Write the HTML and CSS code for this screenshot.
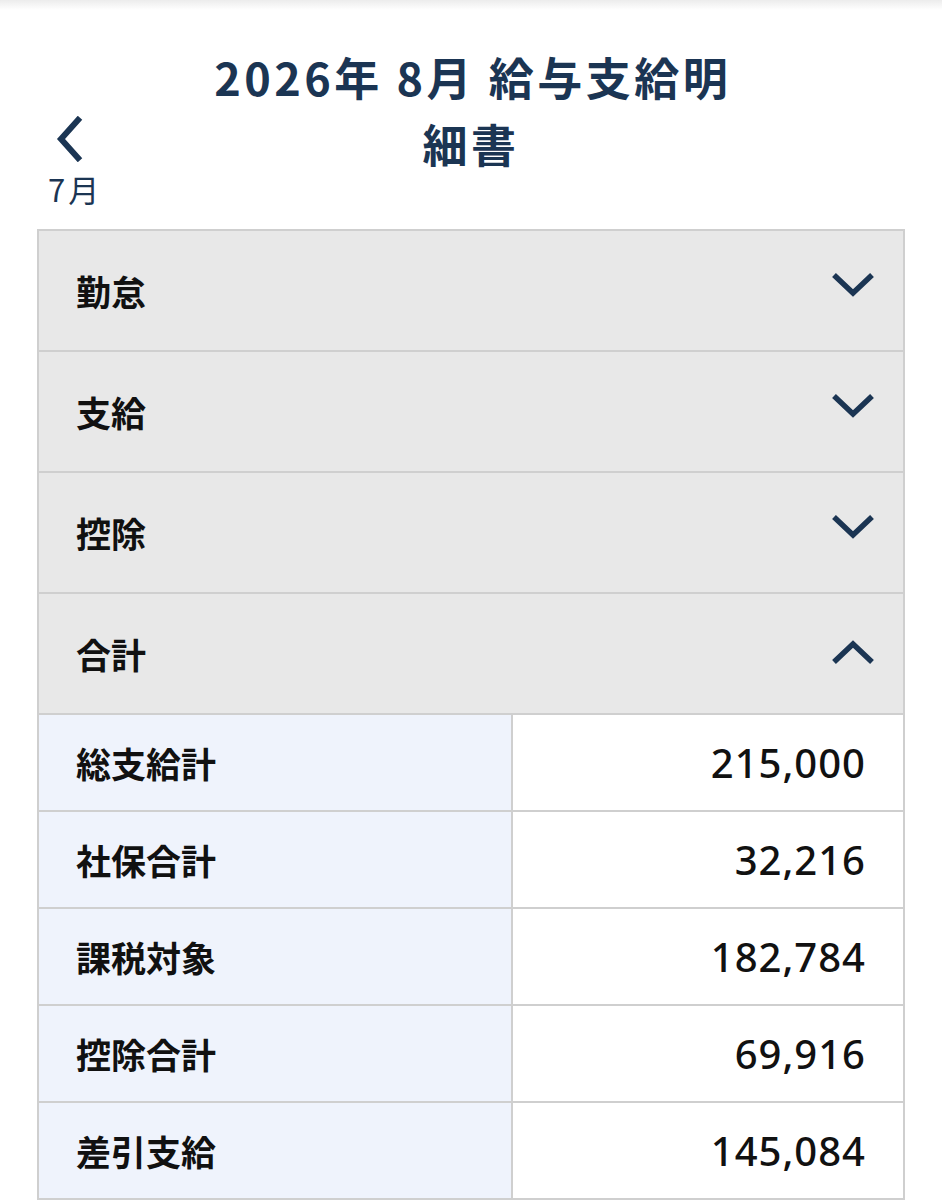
FILE: index.html
```html
<!DOCTYPE html>
<html lang="ja">
<head>
<meta charset="utf-8">
<link rel="stylesheet" href="styles.css">
</head>
<body>
<div class="topshade"></div>
<header class="header">
  <div class="back">
    <svg class="back-icon" width="34" height="46" viewBox="0 0 34 46"><path d="M27 4 L10 23 L27 42" fill="none" stroke="#1b3553" stroke-width="6" stroke-linecap="square"/></svg>
    <span class="back-label">7月</span>
  </div>
  <h1 class="title">2026年 8月 給与支給明細書</h1>
  <div class="spacer"></div>
</header>
<main class="panel">
  <div class="section"><span class="section-name">勤怠</span><svg class="chev" width="48" height="30" viewBox="0 0 48 30"><path d="M5 5 L24 23 L43 5" fill="none" stroke="#1b3553" stroke-width="5.5"/></svg></div>
  <div class="section"><span class="section-name">支給</span><svg class="chev" width="48" height="30" viewBox="0 0 48 30"><path d="M5 5 L24 23 L43 5" fill="none" stroke="#1b3553" stroke-width="5.5"/></svg></div>
  <div class="section"><span class="section-name">控除</span><svg class="chev" width="48" height="30" viewBox="0 0 48 30"><path d="M5 5 L24 23 L43 5" fill="none" stroke="#1b3553" stroke-width="5.5"/></svg></div>
  <div class="section open"><span class="section-name">合計</span><svg class="chev up" width="48" height="30" viewBox="0 0 48 30"><path d="M5 25 L24 7 L43 25" fill="none" stroke="#1b3553" stroke-width="5.5"/></svg></div>
  <div class="rows">
    <div class="row"><div class="label">総支給計</div><div class="value">215,000</div></div>
    <div class="row"><div class="label">社保合計</div><div class="value">32,216</div></div>
    <div class="row"><div class="label">課税対象</div><div class="value">182,784</div></div>
    <div class="row"><div class="label">控除合計</div><div class="value">69,916</div></div>
    <div class="row"><div class="label">差引支給</div><div class="value">145,084</div></div>
  </div>
</main>
</body>
</html>
```
FILE: styles.css
```css
html, body {
  margin: 0;
  padding: 0;
  background: #ffffff;
}
body {
  font-family: "Noto Sans CJK JP", "Noto Sans", sans-serif;
  color: #111;
}
.topshade {
  height: 10px;
  background: linear-gradient(#ececec, #ffffff);
  margin-bottom: -10px;
}
.header {
  display: grid;
  grid-template-columns: 1fr 540px 1fr;
  align-items: start;
  padding: 43px 0 0;
  height: 229px;
  box-sizing: border-box;
}
.back {
  display: flex;
  flex-direction: column;
  align-items: flex-start;
  padding: 73px 0 0 48px;
}
.back-icon {
  display: block;
  margin-left: 3px;
}
.back-label {
  font-size: 31px;
  line-height: 36px;
  margin-top: 9px;
  color: #1b3553;
  font-weight: 400;
  letter-spacing: 3px;
}
.title {
  margin: 0;
  text-align: center;
  font-size: 45px;
  line-height: 67px;
  font-weight: 700;
  color: #1b3553;
  letter-spacing: 3.5px;
  text-indent: 3.5px;
}
.panel {
  margin: 0 37px;
  border: 2px solid #cfcfcf;
}
.section {
  height: 119px;
  background: #e8e8e8;
  border-bottom: 2px solid #cfcfcf;
  display: flex;
  align-items: center;
  justify-content: space-between;
  padding: 0 26px 0 37px;
}
.section-name {
  font-size: 35px;
  font-weight: 700;
  color: #111;
}
.chev {
  display: block;
  margin-top: -12px;
}
.chev.up {
  margin-top: -4px;
}
.rows {
  display: flex;
  flex-direction: column;
}
.row {
  display: grid;
  grid-template-columns: 474px 1fr;
  height: 95px;
  border-bottom: 2px solid #cfcfcf;
}
.row:last-child {
  border-bottom: 0;
}
.label {
  background: #eff3fc;
  border-right: 2px solid #cfcfcf;
  display: flex;
  align-items: center;
  padding-left: 37px;
  font-size: 35px;
  font-weight: 700;
  color: #111;
}
.value {
  display: flex;
  align-items: center;
  justify-content: flex-end;
  padding-right: 37px;
  font-family: "Noto Sans", "Liberation Sans", sans-serif;
  font-weight: 500;
  font-size: 40px;
  letter-spacing: 1px;
  color: #111;
}
```
